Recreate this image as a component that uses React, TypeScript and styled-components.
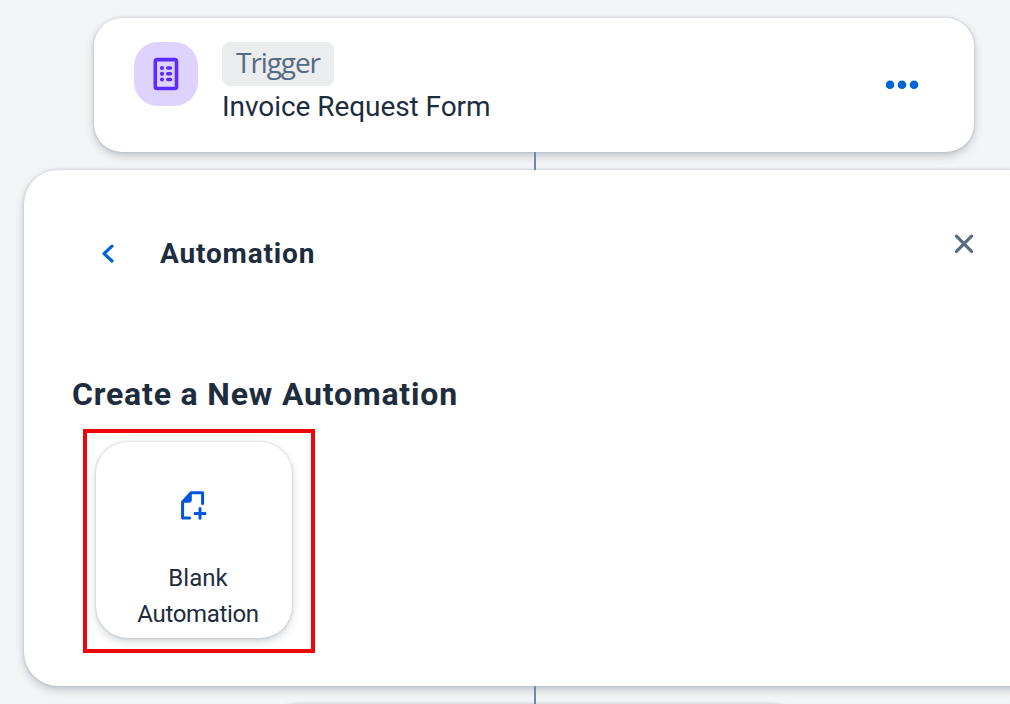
import React from "react";
import styled, { createGlobalStyle } from "styled-components";

const Global = createGlobalStyle`
  * { box-sizing: border-box; }
  body { margin: 0; background: #f5f6f7; }
`;

const Canvas = styled.main`
  width: 1010px;
  height: 704px;
  padding-top: 18px;
  overflow: hidden;
  display: flex;
  flex-direction: column;
  background: #f4f5f7;
  color: #1d2d3e;
  font-family: Roboto, "Open Sans", sans-serif;
`;

const shadow = "0 0 3px rgba(34, 53, 72, 0.22), 0 4px 10px rgba(34, 53, 72, 0.24)";

const StepCard = styled.section`
  flex: none;
  width: 880px;
  height: 134px;
  margin-left: 94px;
  padding: 24px 54px 0 40px;
  display: flex;
  align-items: flex-start;
  background: #fff;
  border-radius: 28px;
  box-shadow: ${shadow};
`;

const StepIcon = styled.div`
  width: 64px;
  height: 64px;
  border-radius: 24px;
  background: #ded3ff;
`;

const StepText = styled.div`
  flex: 1;
  margin-left: 24px;
`;

const Label = styled.span<{ $size: number; $line: number; $spacing?: number; $weight?: number }>`
  display: block;
  white-space: nowrap;
  font-size: ${(p) => p.$size}px;
  line-height: ${(p) => p.$line}px;
  letter-spacing: ${(p) => p.$spacing ?? 0}px;
  font-weight: ${(p) => p.$weight ?? 400};
`;

const Tag = styled(Label)`
  width: 112px;
  height: 44px;
  border-radius: 8px;
  background: #eaecee;
  color: #556b82;
  text-align: center;
  font-family: "Open Sans", sans-serif;
`;

const IconButton = styled.button<{ $top?: number }>`
  display: flex;
  margin: ${(p) => p.$top ?? 0}px 0 0;
  padding: 0;
  border: 0;
  background: none;
`;

const Connector = styled.div`
  flex: none;
  width: 2px;
  height: 18px;
  margin-left: 534px;
  background: #7189a5;
  position: relative;
`;

const Panel = styled.section`
  flex: none;
  width: 1020px;
  height: 516px;
  margin-left: 24px;
  padding: 60px 68px 0 48px;
  background: #fff;
  border-radius: 34px;
  box-shadow: ${shadow};
`;

const PanelHeader = styled.header`
  display: flex;
  align-items: flex-start;
  height: 144px;
  padding-left: 28px;
`;

const Title = styled(Label)`
  margin: 5px auto 0 44px;
`;

const SectionTitle = styled(Label)`
  margin: 0;
`;

const Selection = styled.div`
  width: 232px;
  height: 224px;
  margin: 15px 0 0 11px;
  padding: 9px;
  border: 4px solid #ee0606;
`;

const Tile = styled.button`
  display: flex;
  flex-direction: column;
  align-items: center;
  width: 196px;
  height: 196px;
  padding: 47px 0 0;
  border: 0;
  border-radius: 32px;
  background: #fff;
  color: inherit;
  font-family: inherit;
  box-shadow: 0 0 3px rgba(34, 53, 72, 0.24), 0 4px 8px rgba(34, 53, 72, 0.2);
`;

const TileText = styled.div`
  margin: 39px 0 0 8px;
  text-align: center;
`;

const NextCard = styled.div`
  flex: none;
  width: 530px;
  height: 134px;
  margin-left: 270px;
  border-radius: 28px;
  background: #fff;
  box-shadow: ${shadow};
`;

const FormIcon = () => (
  <svg width="64" height="64" viewBox="0 0 64 64" fill="none" stroke="#5b2bff">
    <rect x="21.3" y="17.6" width="21.2" height="28.9" rx="1.8" strokeWidth="3.6" />
    <g strokeLinecap="round" strokeWidth="3.6">
      <path d="M28 26h.01M28 31.8h.01M28 37.5h.01" strokeWidth="4.2" />
      <path d="M33.8 26h2.7M33.8 31.8h2.7M33.8 37.5h2.7" />
    </g>
  </svg>
);

const MoreIcon = () => (
  <svg width="34" height="10" viewBox="0 0 34 10" fill="#0064d9">
    <circle cx="4" cy="4.8" r="4.3" />
    <circle cx="16" cy="4.8" r="4.3" />
    <circle cx="28" cy="4.8" r="4.3" />
  </svg>
);

const BackIcon = () => (
  <svg width="16" height="24" viewBox="0 0 16 24" fill="none" stroke="#0064d9" strokeWidth="3.2" strokeLinecap="round" strokeLinejoin="round">
    <path d="M12 4.2 4 11.6l8 7.4" />
  </svg>
);

const CloseIcon = () => (
  <svg width="24" height="24" viewBox="0 0 24 24" fill="none" stroke="#556b82" strokeWidth="3.2" strokeLinecap="round">
    <path d="m4.4 4.2 15.2 15.2M19.6 4.2 4.4 19.4" />
  </svg>
);

const AddDocumentIcon = () => (
  <svg width="32" height="32" viewBox="0 0 32 32" fill="none" stroke="#0057d9" strokeWidth="3" strokeLinecap="round" strokeLinejoin="round">
    <g transform="translate(-.8 .2)">
      <path d="M12.5 28.9H5.4V12.7L13.8 3.5h11.6v10.7" />
      <path d="M5.5 12.7 13.8 3.6v7q0 2.1-2.1 2.1Z" fill="#0057d9" strokeWidth="1.6" />
      <path d="M22.8 19.3v9.8M17.8 24.2h10" />
    </g>
  </svg>
);

export default function App() {
  return (
    <>
      <Global />
      <Canvas>
        <StepCard>
          <StepIcon><FormIcon /></StepIcon>
          <StepText>
            <Tag $size={28} $line={40} $spacing={-1.1} $weight={500}>Trigger</Tag>
            <Label $size={28} $line={42} $spacing={-0.06}>Invoice Request Form</Label>
          </StepText>
          <IconButton $top={38} aria-label="More"><MoreIcon /></IconButton>
        </StepCard>
        <Connector />
        <Panel>
          <PanelHeader>
            <IconButton $top={12} aria-label="Back"><BackIcon /></IconButton>
            <Title as="h2" $size={28} $line={38} $spacing={0.84} $weight={700}>Automation</Title>
            <IconButton $top={2} aria-label="Close"><CloseIcon /></IconButton>
          </PanelHeader>
          <SectionTitle as="h3" $size={32} $line={40} $spacing={0.82} $weight={700}>Create a New Automation</SectionTitle>
          <Selection>
            <Tile>
              <AddDocumentIcon />
              <TileText>
                <Label $size={24} $line={36}>Blank</Label>
                <Label $size={24} $line={36} $spacing={-0.35}>Automation</Label>
              </TileText>
            </Tile>
          </Selection>
        </Panel>
        <Connector />
        <NextCard />
      </Canvas>
    </>
  );
}
